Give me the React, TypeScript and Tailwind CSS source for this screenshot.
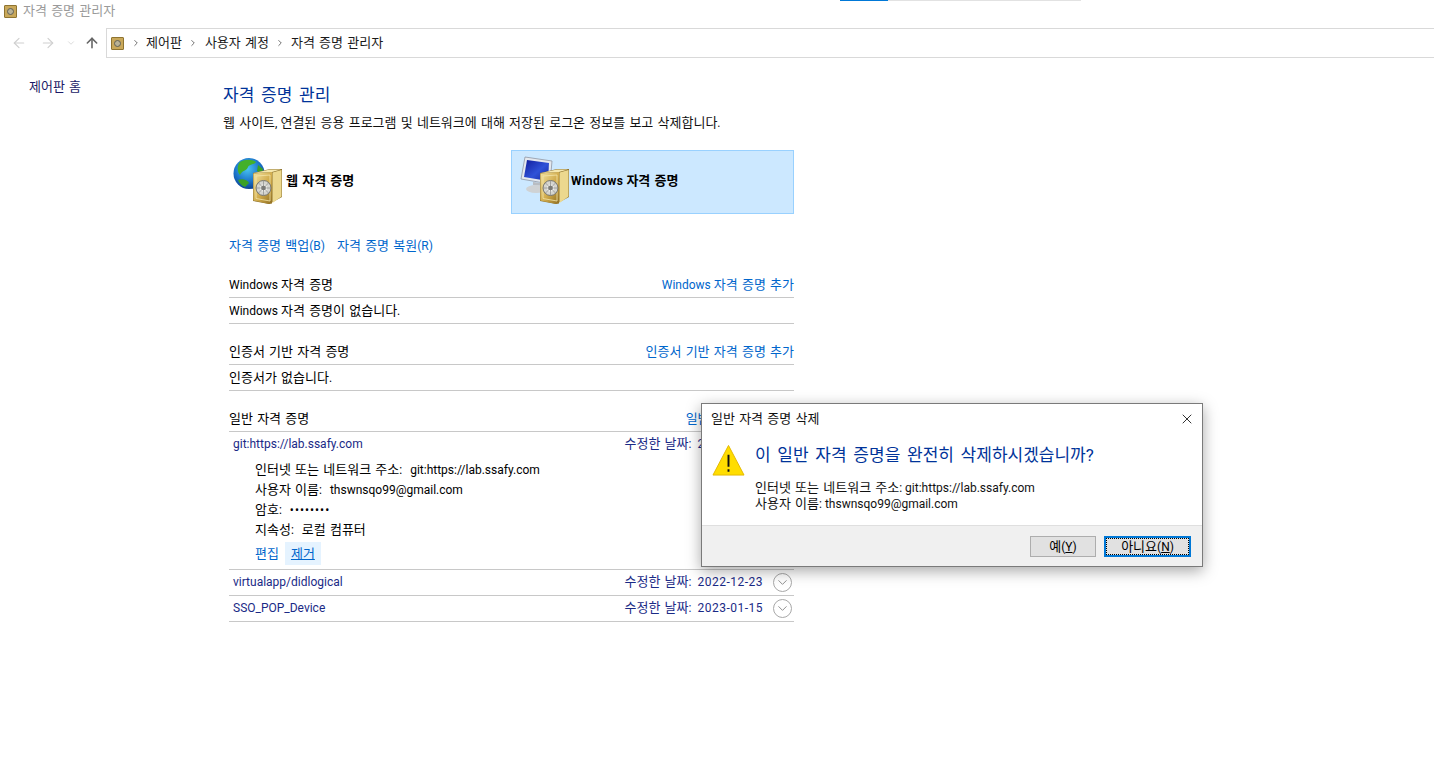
import { Fragment } from "react";
import { ArrowLeft, ArrowRight, ArrowUp, ChevronDown, ChevronRight, X } from "lucide-react";

const font = "font-['Roboto','Noto_Sans_CJK_KR',sans-serif]";

// hangul runs are set a bit larger than latin, like Malgun Gothic next to Segoe UI
function T({ children }: { children: string }) {
  const parts = children.split(/([\uAC00-\uD7A3]+(?: [\uAC00-\uD7A3]+)*)/);
  return (
    <>
      {parts.map((p, i) =>
        i % 2 === 1 ? (
          <span key={i} className="text-[13px] [word-spacing:1px]">
            {p}
          </span>
        ) : (
          <Fragment key={i}>{p}</Fragment>
        ),
      )}
    </>
  );
}

function Vault({ id }: { id: string }) {
  return (
    <g>
      <defs>
        <linearGradient id={id} x1="0" y1="0" x2="1" y2="1">
          <stop offset="0" stopColor="#f3e3a0" />
          <stop offset="0.55" stopColor="#d0aa4a" />
          <stop offset="1" stopColor="#8f6e22" />
        </linearGradient>
      </defs>
      <path d="M0 5 L17 1 L29 1 L29 29 L16 36 L0 33 Z" fill="#8f7430" />
      <path d="M0.5 5.5 L19 4 L19 35.5 L16 36 L0.5 32.5 Z" fill={`url(#${id})`} />
      <path d="M1 5 L17 1.5 L28 1.5 L19 4 Z" fill="#f5e7ad" />
      <path d="M19.5 4.5 L28.5 2 L28.5 28.5 L19.5 35 Z" fill="#ecd88e" />
      <path d="M3 8 L17 7 L17 33 L3 30.5 Z" fill="none" stroke="#f4e6aa" strokeWidth="0.8" />
      <circle cx="10.5" cy="20" r="7.5" fill="#d5d5d0" stroke="#77766e" strokeWidth="1" />
      <circle cx="10.5" cy="20" r="3" fill="#85857f" stroke="#f4f4f0" strokeWidth="1.2" />
      <path d="M10.5 13v14M3.5 20h14M5.5 15l10 10M15.5 15l-10 10" stroke="#6f6f6f" strokeWidth="1" opacity="0.5" />
    </g>
  );
}

function GlobeVault() {
  return (
    <svg width="52" height="52" viewBox="0 0 52 52">
      <defs>
        <radialGradient id="gl" cx="0.45" cy="0.35" r="0.7">
          <stop offset="0" stopColor="#49c4f2" />
          <stop offset="0.6" stopColor="#1a72c8" />
          <stop offset="1" stopColor="#0b3a86" />
        </radialGradient>
      </defs>
      <circle cx="17" cy="17.5" r="15.5" fill="url(#gl)" />
      <path d="M8 6c5-3 12-3 16 0-2 3-7 2-8 5-1 4-6 3-8 8-3-3-3-10 0-13z" fill="#43b02a" />
      <path d="M6 24c4-2 10 0 11 3l-4 4c-3-1-6-4-7-7zM26 9l5 4-1 5-5-3z" fill="#3aa026" />
      <g transform="translate(21 12)">
        <Vault id="v1" />
      </g>
    </svg>
  );
}

function MonitorVault() {
  return (
    <svg width="52" height="52" viewBox="0 0 52 52">
      <defs>
        <linearGradient id="sc" x1="0" y1="0" x2="1" y2="1">
          <stop offset="0" stopColor="#101c9c" />
          <stop offset="0.55" stopColor="#2f52d8" />
          <stop offset="1" stopColor="#14239a" />
        </linearGradient>
      </defs>
      <path d="M6 1 L33 5 L31 28 L2 23 Z" fill="#e4e8ee" stroke="#8f97a5" strokeWidth="0.8" />
      <path d="M8 4 L30 7 L29 25 L5 21 Z" fill="url(#sc)" />
      <path d="M14 26 L22 27 L22 30 L14 29 Z" fill="#b9bdc2" />
      <ellipse cx="17" cy="33" rx="10" ry="4" fill="#cfd2d4" />
      <g transform="translate(21 12)">
        <Vault id="v2" />
      </g>
    </svg>
  );
}

function SmallVault() {
  return (
    <div className="flex h-[13px] w-[13px] items-center justify-center rounded-[1px] border border-[#8f7430] bg-[#c9a85a]">
      <div className="h-[7px] w-[7px] rounded-full border border-[#5f5f55] bg-[#b9b296]" />
    </div>
  );
}

function SectionHead({ title, action }: { title: string; action: string }) {
  return (
    <div className="flex h-[26px] items-center justify-between border-b border-[#c8c8c8] text-black">
      <span><T>{title}</T></span>
      <span className="text-[#0066cc]"><T>{action}</T></span>
    </div>
  );
}

function DateRow({ name, date }: { name: string; date: string }) {
  return (
    <div className="flex h-[26px] items-center border-b border-[#c8c8c8] pb-[2px] pl-1 text-[#1a2a86]">
      <span>{name}</span>
      <span className="ml-auto"><T>수정한 날짜</T>:&nbsp; <span className="tracking-[0.5px]">{date}</span></span>
      <span className="ml-[10px] mr-[2px] mt-[2px] flex h-[19px] w-[19px] items-center justify-center rounded-full border border-[#a8a8a8]">
        <ChevronDown size={15} strokeWidth={1.5} className="text-[#8a8a8a]" />
      </span>
    </div>
  );
}

function Detail({ label, children }: { label: string; children: React.ReactNode }) {
  return (
    <div className="flex h-[20px] items-center gap-[8px]">
      <span><T>{label}</T>:</span>
      <span>{children}</span>
    </div>
  );
}

export default function App() {
  return (
    <div className={`${font} relative h-[784px] w-[1434px] overflow-hidden bg-white text-[12px] text-black`}>
      {/* title bar */}
      <div className="flex h-[1px]">
        <div className="ml-[840px] w-[48px] bg-[#0078d7]" />
        <div className="w-[193px] bg-[#e2e2e2]" />
      </div>
      <div className="flex h-[27px] items-center gap-[6px] pb-[7px] pl-[4px] text-[#9a9a9a]">
        <SmallVault />
        <span><T>자격 증명 관리자</T></span>
      </div>

      {/* address bar */}
      <div className="flex h-[30px] items-center">
        <div className="flex w-[106px] items-center text-[#d0d0d0]">
          <ArrowLeft size={16} strokeWidth={1.8} className="ml-[11px]" />
          <ArrowRight size={16} strokeWidth={1.8} className="ml-[13px]" />
          <ChevronDown size={10} strokeWidth={1.8} className="ml-[10px]" />
          <ArrowUp size={16} strokeWidth={2.4} className="ml-[8px] text-[#666666]" />
        </div>
        <div className="flex h-full flex-1 items-center border border-r-0 border-[#d9d9d9] pl-[4px] text-[#1a1a1a]">
          <SmallVault />
          <ChevronRight size={10} strokeWidth={2.2} className="ml-[7px] text-[#666666]" />
          <span className="ml-[5px]"><T>제어판</T></span>
          <ChevronRight size={10} strokeWidth={2.2} className="ml-[6px] text-[#666666]" />
          <span className="ml-[7px]"><T>사용자 계정</T></span>
          <ChevronRight size={10} strokeWidth={2.2} className="ml-[6px] text-[#666666]" />
          <span className="ml-[6px]"><T>자격 증명 관리자</T></span>
        </div>
      </div>

      <div className="flex">
        {/* left nav */}
        <nav className="w-[223px] pl-[29px] pt-[19px] text-[#1a1a66]"><T>제어판 홈</T></nav>

        {/* main content */}
        <main className="w-[571px] pt-[25px]">
          <h1 className="text-[17px] leading-[24px] text-[#003399] [word-spacing:2.5px]">자격 증명 관리</h1>
          <p className="mt-[7px] leading-[18px] text-[#111111]">
            <T>웹 사이트, 연결된 응용 프로그램 및 네트워크에 대해 저장된 로그온 정보를 보고 삭제합니다.</T>
          </p>

          <div className="mt-[18px] flex h-[64px]">
            <div className="flex w-[288px] items-center pl-[9px] font-bold">
              <GlobeVault />
              <span className="ml-[2px] mt-[-3px]"><T>웹 자격 증명</T></span>
            </div>
            <div className="flex flex-1 items-center border border-[#99d1ff] bg-[#cce8ff] pl-[7px] font-bold">
              <MonitorVault />
              <span className="mt-[-3px]"><span className="tracking-[0.5px]">Windows</span> <T>자격 증명</T></span>
            </div>
          </div>

          <div className="mt-[23px] flex gap-[12px] pl-[6px] leading-[18px] text-[#0066cc]">
            <span><T>자격 증명 백업</T>(B)</span>
            <span><T>자격 증명 복원</T>(R)</span>
          </div>

          <div className="ml-[6px]">
            <div className="mt-[17px]">
              <SectionHead title="Windows 자격 증명" action="Windows 자격 증명 추가" />
              <div className="flex h-[26px] items-center border-b border-[#c8c8c8]"><span><T>Windows 자격 증명이 없습니다.</T></span></div>
            </div>
            <div className="mt-[15px]">
              <SectionHead title="인증서 기반 자격 증명" action="인증서 기반 자격 증명 추가" />
              <div className="flex h-[26px] items-center border-b border-[#c8c8c8]"><span><T>인증서가 없습니다.</T></span></div>
            </div>
            <div className="mt-[15px]">
              <SectionHead title="일반 자격 증명" action="일반 자격 증명 추가" />
              <div className="flex h-[24px] items-center pl-1 text-[#1a2a86]">
                <span>git:https://lab.ssafy.com</span>
                <span className="ml-auto mr-[31px]"><T>수정한 날짜</T>:&nbsp; <span className="tracking-[0.5px]">2023-01-15</span></span>
              </div>
              <div className="border-b border-[#c8c8c8] pb-[4px] pl-[26px] pt-[4px]">
                <Detail label="인터넷 또는 네트워크 주소">git:https://lab.ssafy.com</Detail>
                <Detail label="사용자 이름">thswnsqo99@gmail.com</Detail>
                <Detail label="암호"><span className="tracking-[1px]">••••••••</span></Detail>
                <Detail label="지속성"><T>로컬 컴퓨터</T></Detail>
                <div className="mt-[2px] flex h-[23px] items-center text-[#0066cc]">
                  <span><T>편집</T></span>
                  <span className="ml-[6px] flex h-full items-center bg-[#e5f3ff] px-[6px]">
                    <span className="underline"><T>제거</T></span>
                  </span>
                </div>
              </div>
              <DateRow name="virtualapp/didlogical" date="2022-12-23" />
              <DateRow name="SSO_POP_Device" date="2023-01-15" />
            </div>
          </div>
        </main>
      </div>

      {/* delete dialog */}
      <div className="absolute left-[701px] top-[403px] w-[502px] border border-[#7a7a7a] bg-white shadow-[0_4px_14px_rgba(0,0,0,0.35)]">
        <div className="flex h-[29px] items-center justify-between pl-[9px] pr-[7px] text-[#111111]">
          <span><T>일반 자격 증명 삭제</T></span>
          <X size={16} strokeWidth={1.3} />
        </div>
        <div className="flex h-[92px] pl-[10px] pt-[11px]">
          <svg width="33" height="33" viewBox="0 0 34 34" className="shrink-0">
            <path d="M17 1.5 L33 32 L1 32 Z" fill="#ffdd00" stroke="#e3b800" strokeWidth="1" strokeLinejoin="round" />
            <path d="M16 11h2v12.5h-2zM16 26h2v2.5h-2z" fill="#111111" />
          </svg>
          <div className="ml-[10px] -mt-[1px]">
            <div className="text-[17px] leading-[24px] text-[#003399] [word-spacing:2.5px]">이 일반 자격 증명을 완전히 삭제하시겠습니까?</div>
            <div className="mt-[13px] leading-[15px] text-[#111111]">
              <div><T>인터넷 또는 네트워크 주소</T>: git:https://lab.ssafy.com</div>
              <div><T>사용자 이름</T>: thswnsqo99@gmail.com</div>
            </div>
          </div>
        </div>
        <div className="flex h-[41px] items-center justify-end gap-[8px] border-t border-[#dfdfdf] bg-[#f0f0f0] pr-[11px]">
          <button className="h-[21px] w-[66px] border border-[#adadad] bg-[#e1e1e1] text-[12px] leading-none">
            <T>예</T>(<span className="underline">Y</span>)
          </button>
          <button className="h-[21px] w-[87px] border-2 border-[#0078d7] bg-[#e1e1e1] text-[12px] leading-none outline-1 -outline-offset-3 outline-dotted outline-black">
            <T>아니요</T>(<span className="underline">N</span>)
          </button>
        </div>
      </div>
    </div>
  );
}
